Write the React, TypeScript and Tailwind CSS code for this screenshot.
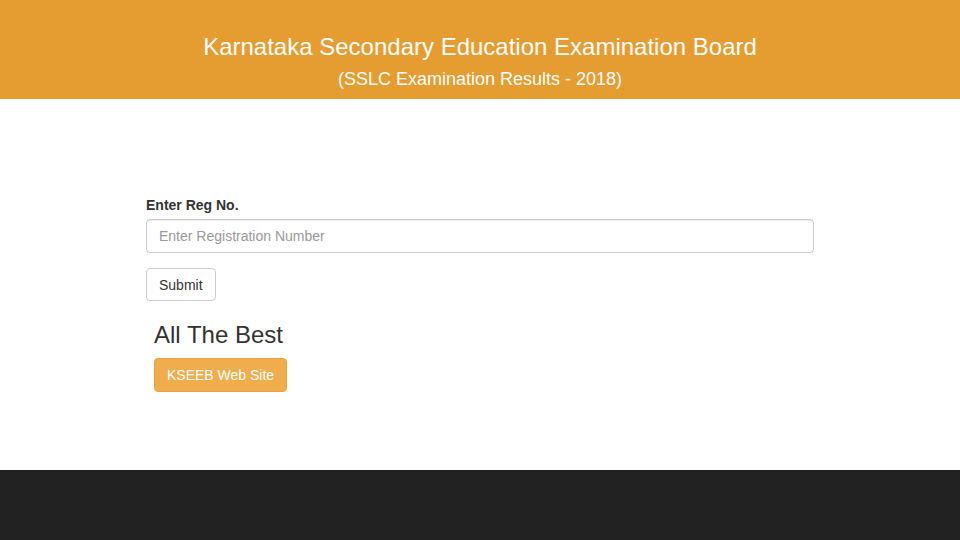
export default function App() {
  return (
    <div className="flex min-h-[540px] w-full flex-col bg-white font-['Liberation_Sans',Arial,sans-serif] text-[14px] text-[#333]">
      {/* header */}
      <header className="flex h-[99px] flex-col items-center bg-[#e59c30] pt-[32px] text-white">
        <h1 className="text-[24px] leading-[30px]">Karnataka Secondary Education Examination Board</h1>
        <p className="mt-[6px] text-[18px] leading-[22px]">(SSLC Examination Results - 2018)</p>
      </header>

      {/* form */}
      <main className="mx-auto w-[668px] pt-[96px] pb-[78px]">
        <div className="mb-[15px]">
          <label className="mb-[4px] block text-[14px] leading-[20px] font-bold">Enter Reg No.</label>
          <input
            type="text"
            placeholder="Enter Registration Number"
            className="block h-[34px] w-full rounded-[4px] border border-[#ccc] px-[12px] text-[14px] text-[#555] shadow-[inset_0_1px_1px_rgba(0,0,0,0.075)] outline-none placeholder:text-[#999]"
          />
        </div>
        <button className="h-[33px] rounded-[4px] border border-[#ccc] bg-white px-[12px] text-[14px] leading-[20px] text-[#333]">
          Submit
        </button>
        <div className="px-[8px]">
          <h3 className="mt-[21px] mb-[10px] text-[24px] leading-[26px]">All The Best</h3>
          <button className="h-[34px] rounded-[4px] border border-[#eea236] bg-[#f0ad4e] px-[12px] text-[14px] leading-[20px] text-white">
            KSEEB Web Site
          </button>
        </div>
      </main>

      {/* footer */}
      <footer className="flex-1 bg-[#222]" />
    </div>
  )
}
